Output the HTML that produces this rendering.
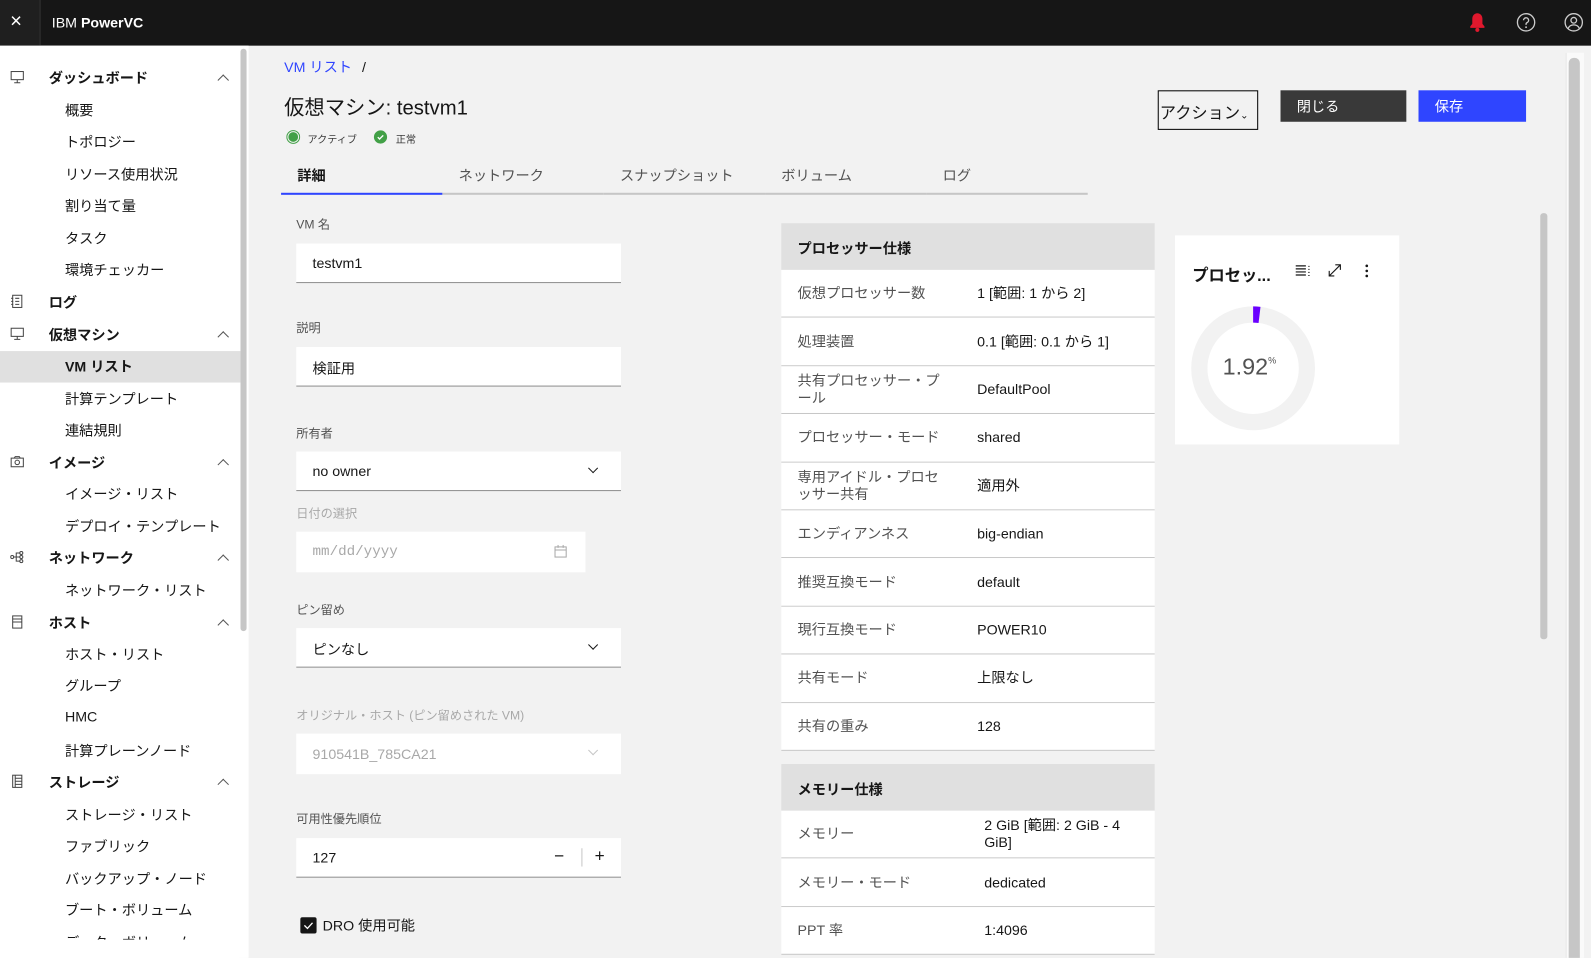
<!DOCTYPE html>
<html><head><meta charset="utf-8"><style>
*{box-sizing:border-box;margin:0;padding:0}
html,body{width:1591px;height:957px;overflow:hidden;background:#f2f2f2}
#w{position:absolute;left:0;top:0;width:1568px;height:944px;transform:scale(1.01467);transform-origin:0 0;font-family:"Liberation Sans","Noto Sans CJK JP",sans-serif;color:#161616;font-size:14px;overflow:hidden}
.a{position:absolute;white-space:nowrap}
.hdr{left:0;top:0;width:1568px;height:45px;background:#161616}
.side{left:0;top:45px;width:245px;height:912px;background:#fff}
.sh{left:48px;font-size:14px;font-weight:bold;color:#161616}
.si{left:64px;font-size:14px;color:#161616}
.chev{left:216px;width:8px;height:8px;border-left:1.3px solid #555;border-top:1.3px solid #555;transform:rotate(45deg)}
.lbl{left:292px;font-size:12px;color:#525252}
.inp{left:292px;width:320px;height:39px;background:#fff;border-bottom:1px solid #8d8d8d}
.inp span{position:absolute;left:16px;top:11px;font-size:14px}
.dd{position:absolute;right:24px;top:13px;width:7px;height:7px;border-right:1.3px solid #161616;border-bottom:1.3px solid #161616;transform:rotate(45deg)}
.tab{top:160px;height:32px;width:159px;border-bottom:2px solid #c6c6c6;font-size:14px;color:#525252;padding:3px 16px}
.tbl{left:770px;width:368px}
.th{height:46px;background:#e0e0e0;font-weight:bold;font-size:14px;padding:15px 16px}
.tr{height:47.4px;background:#fff;border-bottom:1px solid #c6c6c6;position:relative;font-size:14px}
.tr .k{position:absolute;left:16px;top:50%;transform:translateY(-50%);color:#525252;width:150px;white-space:normal;line-height:17px}
.tr .v{position:absolute;left:193px;top:50%;transform:translateY(-50%);width:160px;white-space:normal;line-height:17px}
</style></head><body><div id="w">
<div class="a hdr"></div>
<div class="a" style="left:0;top:0;width:40px;height:45px;background:#1f1f1f;border-right:1px solid #333"></div>
<div class="a" style="left:10px;top:10px;color:#fff;font-size:20px">×</div>
<div class="a" style="left:51px;top:14px;color:#fff;font-size:14px">IBM <b>PowerVC</b></div>
<svg class="a" style="left:1447px;top:12px" width="18" height="20" viewBox="0 0 18 20"><path d="M9 1c-3 0-5 2.5-5 5.5v5L2 14v1.5h14V14l-2-2.5v-5C14 3.5 12 1 9 1z" fill="#e0182d"/><circle cx="9" cy="17.5" r="2" fill="#e0182d"/></svg>
<svg class="a" style="left:1494px;top:12px" width="20" height="20" viewBox="0 0 20 20"><circle cx="10" cy="10" r="8.5" fill="none" stroke="#ccc" stroke-width="1.3"/><path d="M7.5 8a2.5 2.5 0 1 1 3.5 2.3c-.7.3-1 .8-1 1.5v.7" fill="none" stroke="#ccc" stroke-width="1.3"/><circle cx="10" cy="14.8" r=".9" fill="#ccc"/></svg>
<svg class="a" style="left:1541px;top:12px" width="20" height="20" viewBox="0 0 20 20"><circle cx="10" cy="10" r="8.5" fill="none" stroke="#ccc" stroke-width="1.3"/><circle cx="10" cy="8" r="2.8" fill="none" stroke="#ccc" stroke-width="1.3"/><path d="M4.5 16c1-2.5 3-3.5 5.5-3.5s4.5 1 5.5 3.5" fill="none" stroke="#ccc" stroke-width="1.3"/></svg>

<div class="a side"></div>
<div class="a" style="left:237px;top:48px;width:6px;height:574px;background:#c6c6c6;border-radius:3px"></div>
<div class="a" style="left:0;top:346px;width:237px;height:31px;background:#e0e0e0"></div>

<svg class="a" style="left:10px;top:69px" width="14" height="14" viewBox="0 0 14 14"><rect x="1" y="1.5" width="12" height="8" fill="none" stroke="#444"/><path d="M7 9.5v3M4 12.5h6" stroke="#444"/></svg>
<svg class="a" style="left:10px;top:322px" width="14" height="14" viewBox="0 0 14 14"><rect x="1" y="1.5" width="12" height="8" fill="none" stroke="#444"/><path d="M7 9.5v3M4 12.5h6" stroke="#444"/></svg>
<svg class="a" style="left:10px;top:290px" width="14" height="14" viewBox="0 0 14 14"><rect x="2.5" y="1" width="9" height="12" fill="none" stroke="#444"/><path d="M5 4h4M5 7h4M5 10h4M1 4h2M1 7h2M1 10h2" stroke="#444"/></svg>
<svg class="a" style="left:10px;top:448px" width="14" height="14" viewBox="0 0 14 14"><rect x="1" y="3.5" width="12" height="8.5" fill="none" stroke="#444"/><circle cx="7" cy="7.7" r="2.2" fill="none" stroke="#444"/><path d="M4 3.5l1-1.5h4l1 1.5" fill="none" stroke="#444"/></svg>
<svg class="a" style="left:10px;top:542px" width="14" height="14" viewBox="0 0 14 14"><circle cx="2" cy="7" r="1.5" fill="none" stroke="#444"/><circle cx="11" cy="3" r="1.5" fill="none" stroke="#444"/><circle cx="11" cy="7" r="1.5" fill="none" stroke="#444"/><circle cx="11" cy="11" r="1.5" fill="none" stroke="#444"/><path d="M3.5 7h6M6 7V3h3.5M6 7v4h3.5" fill="none" stroke="#444"/></svg>
<svg class="a" style="left:10px;top:606px" width="14" height="14" viewBox="0 0 14 14"><rect x="2.5" y="1" width="9" height="12" fill="none" stroke="#444"/><path d="M2.5 4h9M2.5 7h9M7 10h.1" stroke="#444"/></svg>
<svg class="a" style="left:10px;top:763px" width="14" height="14" viewBox="0 0 14 14"><rect x="2.5" y="1" width="9" height="12" fill="none" stroke="#444"/><path d="M5 1v12M5 4h6.5M5 7h6.5M5 10h6.5" stroke="#444"/></svg>

<div class="a sh" style="top:67px">ダッシュボード</div><div class="a chev" style="top:75px"></div>
<div class="a si" style="top:99px">概要</div>
<div class="a si" style="top:130px">トポロジー</div>
<div class="a si" style="top:162px">リソース使用状況</div>
<div class="a si" style="top:193px">割り当て量</div>
<div class="a si" style="top:225px">タスク</div>
<div class="a si" style="top:256px">環境チェッカー</div>
<div class="a sh" style="top:288px">ログ</div>
<div class="a sh" style="top:320px">仮想マシン</div><div class="a chev" style="top:328px"></div>
<div class="a si" style="top:351px;font-weight:bold">VM リスト</div>
<div class="a si" style="top:383px">計算テンプレート</div>
<div class="a si" style="top:414px">連結規則</div>
<div class="a sh" style="top:446px">イメージ</div><div class="a chev" style="top:454px"></div>
<div class="a si" style="top:477px">イメージ・リスト</div>
<div class="a si" style="top:509px">デプロイ・テンプレート</div>
<div class="a sh" style="top:540px">ネットワーク</div><div class="a chev" style="top:548px"></div>
<div class="a si" style="top:572px">ネットワーク・リスト</div>
<div class="a sh" style="top:604px">ホスト</div><div class="a chev" style="top:612px"></div>
<div class="a si" style="top:635px">ホスト・リスト</div>
<div class="a si" style="top:666px">グループ</div>
<div class="a si" style="top:698px">HMC</div>
<div class="a si" style="top:730px">計算プレーンノード</div>
<div class="a sh" style="top:761px">ストレージ</div><div class="a chev" style="top:769px"></div>
<div class="a si" style="top:793px">ストレージ・リスト</div>
<div class="a si" style="top:824px">ファブリック</div>
<div class="a si" style="top:856px">バックアップ・ノード</div>
<div class="a si" style="top:887px">ブート・ボリューム</div>
<div class="a si" style="top:919px">データ・ボリューム</div>
<div class="a" style="left:0;top:926px;width:236px;height:30px;background:#fff"></div>

<div class="a" style="left:280px;top:56px;font-size:14px;color:#3045ff">VM リスト <span style="color:#161616;margin-left:6px">/</span></div>
<div class="a" style="left:280px;top:90px;font-size:20px">仮想マシン: testvm1</div>
<svg class="a" style="left:282px;top:128px" width="14" height="14"><circle cx="7" cy="7" r="6.3" fill="none" stroke="#42a047" stroke-width="1"/><circle cx="7" cy="7" r="4.8" fill="#42a047"/></svg>
<div class="a" style="left:303px;top:129px;font-size:10px;color:#393939">アクティブ</div>
<svg class="a" style="left:368px;top:128px" width="14" height="14"><circle cx="7" cy="7" r="6.5" fill="#42a047"/><path d="M4.3 7.2l1.8 1.8 3.6-3.6" stroke="#fff" stroke-width="1.3" fill="none"/></svg>
<div class="a" style="left:390px;top:129px;font-size:10px;color:#393939">正常</div>

<div class="a" style="left:1141px;top:89px;width:99px;height:39px;border:1px solid #000;font-size:16px;padding:8px 1px">アクション<span style="font-size:10px">⌄</span></div>
<div class="a" style="left:1262px;top:89px;width:124px;height:31px;background:#393939;color:#fff;font-size:14px;padding:6px 16px">閉じる</div>
<div class="a" style="left:1398px;top:89px;width:106px;height:31px;background:#2f45ff;color:#fff;font-size:14px;padding:6px 16px">保存</div>

<div class="a tab" style="left:277px;border-bottom-color:#2f45ff;color:#161616;font-weight:bold">詳細</div>
<div class="a tab" style="left:436px">ネットワーク</div>
<div class="a tab" style="left:595px">スナップショット</div>
<div class="a tab" style="left:754px">ボリューム</div>
<div class="a tab" style="left:913px">ログ</div>

<div class="a lbl" style="top:212px">VM 名</div>
<div class="a inp" style="top:240px"><span>testvm1</span></div>
<div class="a lbl" style="top:314px">説明</div>
<div class="a inp" style="top:342px"><span>検証用</span></div>
<div class="a lbl" style="top:418px">所有者</div>
<div class="a inp" style="top:445px"><span>no owner</span><i class="dd"></i></div>
<div class="a lbl" style="top:497px;color:#a8a8a8">日付の選択</div>
<div class="a" style="left:292px;top:524px;width:285px;height:40px;background:#fff"><span style="position:absolute;left:16px;top:12px;font-family:'Liberation Mono',monospace;font-size:14px;color:#a8a8a8">mm/dd/yyyy</span>
<svg style="position:absolute;left:254px;top:13px" width="13" height="13"><rect x="1" y="2" width="11" height="10" fill="none" stroke="#a8a8a8"/><path d="M1 5h11M4 0v3M9 0v3" stroke="#a8a8a8"/></svg></div>
<div class="a lbl" style="top:592px">ピン留め</div>
<div class="a inp" style="top:619px"><span>ピンなし</span><i class="dd"></i></div>
<div class="a lbl" style="top:696px;color:#a8a8a8">オリジナル・ホスト (ピン留めされた VM)</div>
<div class="a" style="left:292px;top:723px;width:320px;height:40px;background:#fff"><span style="position:absolute;left:16px;top:12px;color:#a8a8a8">910541B_785CA21</span><i class="dd" style="border-color:#c6c6c6"></i></div>
<div class="a lbl" style="top:798px">可用性優先順位</div>
<div class="a inp" style="top:826px"><span>127</span>
<span style="left:254px;top:8px;font-size:17px">−</span><span style="left:281px;top:10px;width:1px;height:18px;background:#c6c6c6"></span><span style="left:294px;top:8px;font-size:17px">+</span></div>
<div class="a" style="left:296px;top:904px;width:16px;height:16px;background:#161616;border-radius:2px"><svg width="16" height="16"><path d="M4 8l3 3 5-5.5" stroke="#fff" stroke-width="1.3" fill="none"/></svg></div>
<div class="a" style="left:318px;top:902px;font-size:14px">DRO 使用可能</div>

<div class="a tbl" style="top:220px">
<div class="th">プロセッサー仕様</div>
<div class="tr"><span class="k">仮想プロセッサー数</span><span class="v">1 [範囲: 1 から 2]</span></div>
<div class="tr"><span class="k">処理装置</span><span class="v">0.1 [範囲: 0.1 から 1]</span></div>
<div class="tr"><span class="k">共有プロセッサー・プール</span><span class="v">DefaultPool</span></div>
<div class="tr"><span class="k">プロセッサー・モード</span><span class="v">shared</span></div>
<div class="tr"><span class="k">専用アイドル・プロセッサー共有</span><span class="v">適用外</span></div>
<div class="tr"><span class="k">エンディアンネス</span><span class="v">big-endian</span></div>
<div class="tr"><span class="k">推奨互換モード</span><span class="v">default</span></div>
<div class="tr"><span class="k">現行互換モード</span><span class="v">POWER10</span></div>
<div class="tr"><span class="k">共有モード</span><span class="v">上限なし</span></div>
<div class="tr"><span class="k">共有の重み</span><span class="v">128</span></div>
</div>
<div class="a tbl" style="top:753px">
<div class="th">メモリー仕様</div>
<div class="tr"><span class="k">メモリー</span><span class="v" style="left:200px">2 GiB [範囲: 2 GiB - 4 GiB]</span></div>
<div class="tr"><span class="k">メモリー・モード</span><span class="v" style="left:200px">dedicated</span></div>
<div class="tr"><span class="k">PPT 率</span><span class="v" style="left:200px">1:4096</span></div>
</div>

<div class="a" style="left:1158px;top:232px;width:221px;height:206px;background:#fff"></div>
<div class="a" style="left:1175px;top:258px;font-size:16px;font-weight:bold">プロセッ...</div>
<svg class="a" style="left:1276px;top:260px" width="16" height="14"><path d="M1 2h10M1 5h10M1 8h10M1 11h10M14 2v1M14 5v1M14 8v1M14 11v1" stroke="#161616" stroke-width="1.2"/></svg>
<svg class="a" style="left:1308px;top:259px" width="15" height="15"><path d="M2 13L13 2M8 2h5v5M2 8v5h5" stroke="#161616" stroke-width="1.1" fill="none"/></svg>
<svg class="a" style="left:1344px;top:259px" width="6" height="16"><circle cx="3" cy="3" r="1.3" fill="#161616"/><circle cx="3" cy="8" r="1.3" fill="#161616"/><circle cx="3" cy="13" r="1.3" fill="#161616"/></svg>
<svg class="a" style="left:1172px;top:300px" width="126" height="126"><circle cx="63" cy="63" r="53" fill="none" stroke="#f2f2f2" stroke-width="16"/><circle cx="63" cy="63" r="53" fill="none" stroke="#6a00ff" stroke-width="16" stroke-dasharray="6.4 400" transform="rotate(-90 63 63)"/></svg>
<div class="a" style="left:1205px;top:348px;font-size:23px;color:#525252">1.92<sup style="font-size:9px;vertical-align:11px">%</sup></div>

<div class="a" style="left:1518px;top:210px;width:7px;height:420px;background:#c6c6c6;border-radius:3px"></div>
<div class="a" style="left:1543px;top:52px;width:18px;height:905px;background:#fafafa;border-left:1px solid #e6e6e6"></div>
<div class="a" style="left:1546px;top:57px;width:11px;height:900px;background:#c6c6c6;border-radius:5px"></div>
</div></body></html>
